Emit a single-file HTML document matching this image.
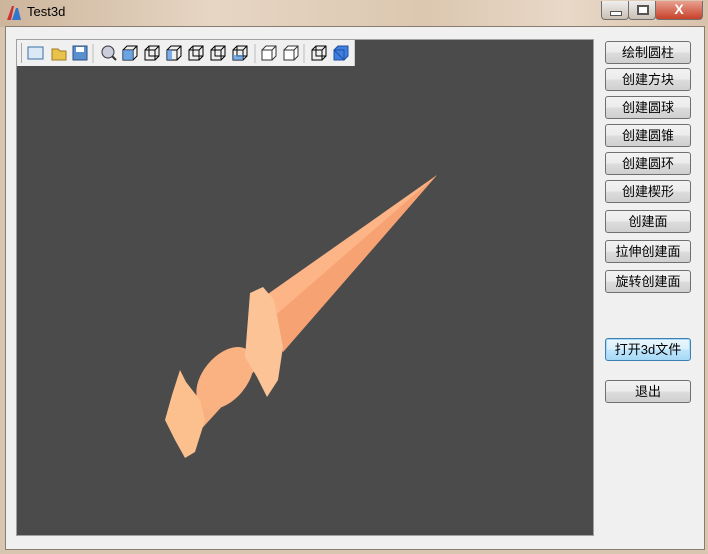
<!DOCTYPE html>
<html><head><meta charset="utf-8"><style>
body{margin:0;width:708px;height:554px;overflow:hidden;background:#d9c6b0;font-family:"Liberation Sans","Noto Sans CJK SC",sans-serif;position:relative}
.tb{position:absolute;left:0;top:0;width:708px;height:27px;background:linear-gradient(90deg,#cdb59b,#e6d6c4 30%,#dcc7b0 60%,#e8d8c7 80%,#d8c2aa)}
.title{position:absolute;left:27px;top:4px;font-size:13px;color:#000}
.win{position:absolute;left:5px;top:26px;width:698px;height:522px;background:#f0f0f0;border:1px solid #8a7c70}
.btn{position:absolute;left:605px;width:84px;height:21px;border:1px solid #707070;border-radius:3px;background:linear-gradient(#f2f2f2,#ebebeb 50%,#dddddd 51%,#cfcfcf);font-size:13px;text-align:center;line-height:21px;color:#000}
.focus{border-color:#3c7fb1;box-shadow:inset 0 0 0 1px #a7d8f5;background:linear-gradient(#eaf6fd,#d9f0fc 50%,#bee6fd 51%,#a7d9f5)}
.panel{position:absolute;left:16px;top:39px;width:576px;height:495px;border:1px solid #a0a0a0;background:#4b4b4b}
.tool{position:absolute;left:0;top:0;width:337px;height:26px;background:#f0f0f0;border-right:1px solid #ccc}
.wb{position:absolute;top:1px;height:18px;border:1px solid #6f6f6f;border-top:none;border-radius:0 0 4px 4px}
</style></head><body>
<div class="tb"></div>
<svg style="position:absolute;left:5px;top:4px" width="18" height="18"><path d="M2 16L7 2L9 2L6 16Z" fill="#c33"/><path d="M7 16L11 4L13 4L16 16Z" fill="#37c"/></svg>
<div class="title">Test3d</div>
<div class="wb" style="left:601px;width:26px;background:linear-gradient(#eee,#cbbfb3)"><div style="position:absolute;left:8px;top:10px;width:10px;height:3px;background:#fff;border:1px solid #555"></div></div>
<div class="wb" style="left:628px;width:26px;background:linear-gradient(#eee,#cbbfb3)"><div style="position:absolute;left:8px;top:4px;width:8px;height:6px;border:2px solid #555;background:#fff"></div></div>
<div class="wb" style="left:655px;width:46px;background:linear-gradient(#e8a08f,#c8412b);color:#fff;font-weight:bold;text-align:center;font-size:14px;line-height:17px">X</div>
<div class="win"></div>
<div class="panel">
<div class="tool">
<div style="position:absolute;left:4px;top:3px;width:1px;height:20px;background:#aaa"></div>
<svg width="337" height="26" style="position:absolute;left:0;top:0">
<rect x="11" y="7" width="15" height="12" fill="#dbe9f6" stroke="#3a6ea5"/>
<path d="M35 9h6l2 2h6v9h-14z" fill="#e8c34b" stroke="#a07a20"/>
<rect x="56" y="6" width="14" height="14" fill="#5a8fd0" stroke="#2a5080"/><rect x="59" y="7" width="8" height="5" fill="#fff"/>
<line x1="76" y1="4" x2="76" y2="23" stroke="#bbb"/>
<circle cx="91" cy="12" r="6" fill="#ccd" stroke="#333"/><line x1="95" y1="16" x2="99" y2="20" stroke="#333" stroke-width="2"/>
<g fill="none" stroke="#000">
<path d="M106 10h10v10h-10zM106 10l4-4h10v10l-4 4M116 10l4-4"/>
<path d="M128 10h10v10h-10zM128 10l4-4h10v10l-4 4M138 10l4-4M132 6v10h10"/>
<path d="M150 10h10v10h-10zM150 10l4-4h10v10l-4 4M160 10l4-4"/>
<path d="M172 10h10v10h-10zM172 10l4-4h10v10l-4 4M182 10l4-4M176 6v10h10"/>
<path d="M194 10h10v10h-10zM194 10l4-4h10v10l-4 4M204 10l4-4M198 6v10h10"/>
<path d="M216 10h10v10h-10zM216 10l4-4h10v10l-4 4M226 10l4-4M220 6v10h10"/>
</g>
<rect x="106" y="10" width="10" height="10" fill="#4a90e0" opacity=".8"/>
<rect x="150" y="10" width="5" height="10" fill="#4a90e0" opacity=".7"/>
<rect x="216" y="15" width="10" height="5" fill="#4a90e0" opacity=".7"/>
<line x1="238" y1="4" x2="238" y2="23" stroke="#bbb"/>
<g fill="#fff" stroke="#333"><path d="M245 10h10v10h-10zM245 10l4-4h10v10l-4 4M255 10l4-4"/><path d="M267 10h10v10h-10zM267 10l4-4h10v10l-4 4M277 10l4-4"/></g>
<line x1="287" y1="4" x2="287" y2="23" stroke="#bbb"/>
<g fill="none" stroke="#000"><path d="M295 10h10v10h-10zM295 10l4-4h10v10l-4 4M305 10l4-4M299 6v10h10"/></g>
<path d="M317 10h10v10h-10zM317 10l4-4h10v10l-4 4z" fill="#3f7fe0" stroke="#2050a0"/>
</svg>
</div>
<svg width="576" height="470" style="position:absolute;left:0;top:27px">
<g transform="translate(-17,-67)">
<polygon points="265,296 437,175 283,352" fill="#fdb486"/>
<polygon points="270,320 437,175 283,352" fill="#f6a272"/>
<line x1="245" y1="362" x2="192" y2="420" stroke="#f7b07f" stroke-width="26" stroke-linecap="round"/>
<ellipse cx="225" cy="378" rx="36" ry="22" transform="rotate(-50 225 378)" fill="#fbb283"/>
<polygon points="250,293 263,287 274,300 283,347 278,380 267,397 257,377 245,357" fill="#fcc496"/>
<polygon points="180,370 186,382 200,400 205,420 195,452 185,458 175,440 165,420 172,395" fill="#fcc08f"/>
</g>
</svg>
</div>
<div class="btn" style="top:41px">绘制圆柱</div>
<div class="btn" style="top:68px">创建方块</div>
<div class="btn" style="top:96px">创建圆球</div>
<div class="btn" style="top:124px">创建圆锥</div>
<div class="btn" style="top:152px">创建圆环</div>
<div class="btn" style="top:180px">创建楔形</div>
<div class="btn" style="top:210px">创建面</div>
<div class="btn" style="top:240px">拉伸创建面</div>
<div class="btn" style="top:270px">旋转创建面</div>
<div class="btn focus" style="top:338px">打开3d文件</div>
<div class="btn" style="top:380px">退出</div>
</body></html>
